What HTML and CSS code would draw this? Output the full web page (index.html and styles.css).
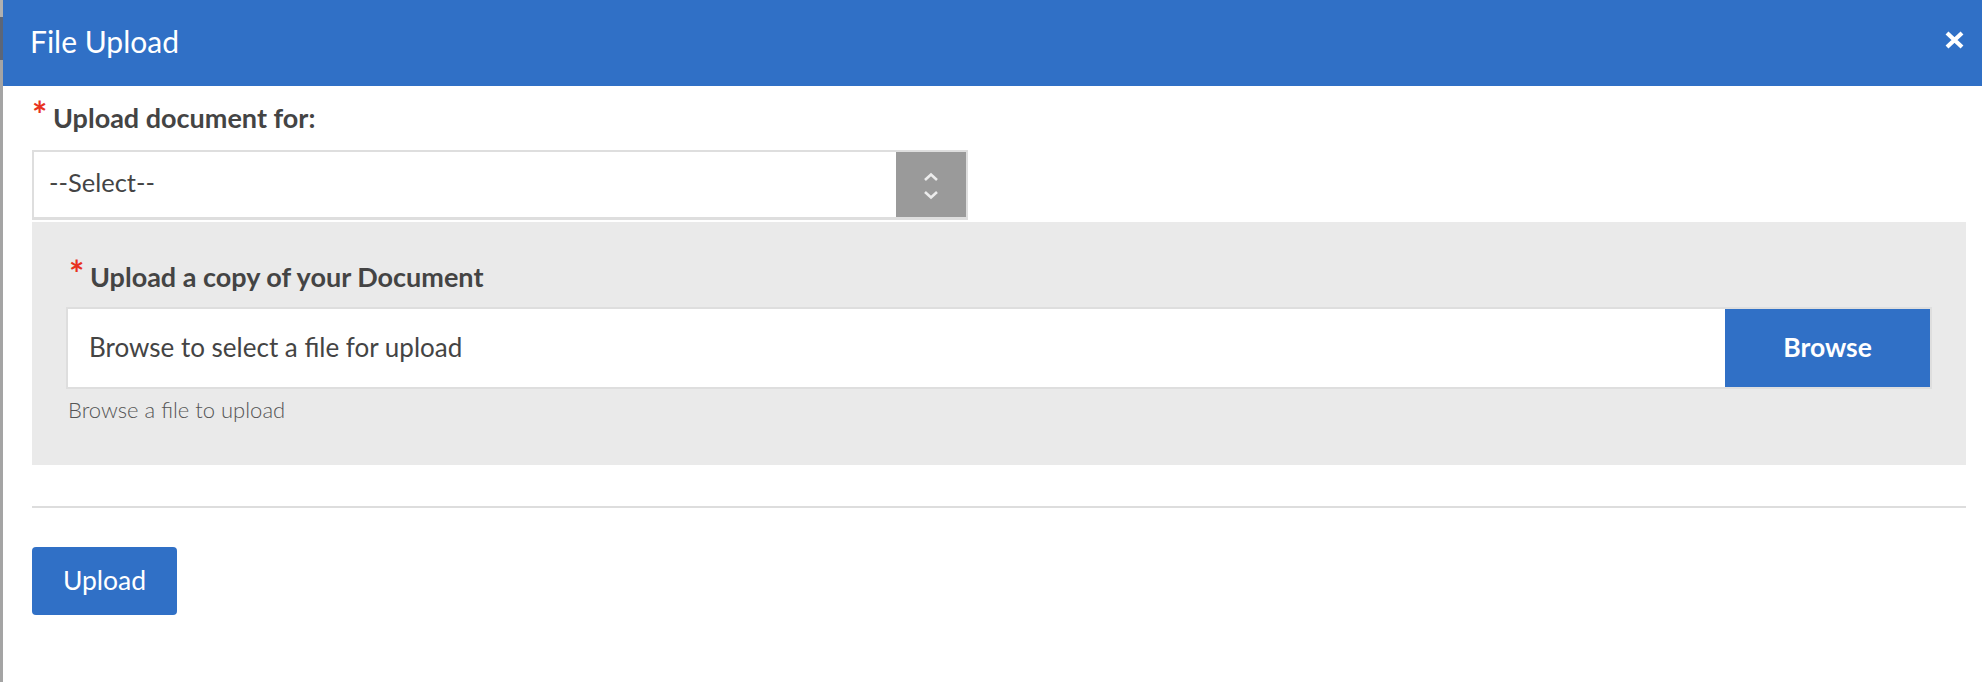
FILE: index.html
```html
<!DOCTYPE html>
<html lang="en">
<head>
<meta charset="utf-8">
<title>File Upload</title>
<link rel="stylesheet" href="styles.css">
</head>
<body>
<div class="page">
  <div class="backdrop-edge"></div>
  <div class="modal">
    <header class="modal-header">
      <h1 class="modal-title">File Upload</h1>
      <button class="close-btn" aria-label="Close">
        <svg width="21" height="18" viewBox="0 0 21 18"><path d="M3 2 L18 16 M18 2 L3 16" stroke="#fff" stroke-width="4.2" stroke-linecap="butt"/></svg>
      </button>
    </header>
    <div class="modal-body">
      <div class="field-label"><span class="req">*</span><span class="label-text">Upload document for:</span></div>
      <div class="select-box">
        <span class="select-text">--Select--</span>
        <span class="spinner">
          <svg width="16" height="30" viewBox="0 0 16 30"><path d="M2 9 L8 3.5 L14 9 M2 21 L8 26.5 L14 21" fill="none" stroke="#ececec" stroke-width="2.6"/></svg>
        </span>
      </div>
      <div class="panel">
        <div class="field-label"><span class="req">*</span><span class="label-text">Upload a copy of your Document</span></div>
        <div class="file-input">
          <span class="file-text">Browse to select a file for upload</span>
          <button class="browse-btn">Browse</button>
        </div>
        <div class="hint">Browse a file to upload</div>
      </div>
      <hr class="divider">
      <button class="upload-btn">Upload</button>
    </div>
  </div>
</div>
</body>
</html>
```

FILE: styles.css
```css
* { box-sizing: border-box; }
html, body {
  margin: 0;
  padding: 0;
  background: #fff;
  font-family: "Lato", "Liberation Sans", sans-serif;
  color: #444;
}
.page {
  display: flex;
  width: 1982px;
  height: 682px;
  overflow: hidden;
}
.backdrop-edge {
  width: 3px;
  flex: 0 0 3px;
  background: linear-gradient(#b0b0b0 0, #b0b0b0 17px, #5c6678 17px, #5c6678 60px, #a4a4a4 60px);
}
.modal {
  flex: 1;
  background: #fff;
}
.modal-header {
  height: 86px;
  background: #3070c6;
  display: flex;
  align-items: center;
  justify-content: space-between;
  padding: 0 17px 0 27px;
}
.modal-title {
  margin: 0;
  font-weight: 400;
  font-size: 30px;
  line-height: 1;
  color: #fff;
  position: relative;
  top: -2px;
}
.close-btn {
  background: none;
  border: 0;
  padding: 0;
  display: flex;
  position: relative;
  top: -3px;
}
.modal-body {
  padding: 17px 16px 0 29px;
}
.field-label {
  display: flex;
  align-items: flex-start;
  height: 30px;
}
.req {
  color: #e8321e;
  font-weight: 700;
  font-size: 36px;
  line-height: 1;
  margin-top: -7px;
  width: 21px;
  padding-left: 0;
}
.label-text {
  font-weight: 700;
  font-size: 27px;
  line-height: 30px;
  color: #444;
}
.select-box {
  margin-top: 17px;
  width: 936px;
  height: 70px;
  border: 2px solid #dedede;
  border-bottom-width: 3px;
  display: flex;
  align-items: stretch;
  background: #fff;
}
.select-text {
  flex: 1;
  display: flex;
  align-items: center;
  padding-left: 15px;
  padding-bottom: 5px;
  font-size: 25.5px;
  color: #444;
}
.spinner {
  width: 70px;
  background: #9a9a9a;
  display: flex;
  align-items: center;
  justify-content: center;
  padding-top: 2px;
}
.panel {
  margin-top: 2px;
  background: #eaeaea;
  padding: 40px 34px 42px 37px;
}
.file-input {
  margin-top: 15px;
  margin-left: -3px;
  height: 82px;
  border: 2px solid #dedede;
  background: #fff;
  display: flex;
  align-items: stretch;
}
.file-text {
  flex: 1;
  display: flex;
  align-items: center;
  padding-left: 21px;
  padding-bottom: 2px;
  font-size: 26px;
  color: #444;
}
.browse-btn {
  width: 205px;
  border: 0;
  margin: 0;
  background: #3070c6;
  color: #fff;
  font-family: inherit;
  font-weight: 700;
  font-size: 26.5px;
  padding: 0 0 3px;
}
.hint {
  margin-top: 8px;
  font-size: 22px;
  line-height: 26px;
  font-weight: 300;
  color: #555;
  margin-left: -1px;
}
.divider {
  margin: 41px 0 0;
  border: 0;
  height: 2px;
  background: #dddddd;
}
.upload-btn {
  margin-top: 39px;
  width: 145px;
  height: 68px;
  border: 0;
  border-radius: 4px;
  background: #3070c6;
  color: #fff;
  font-family: inherit;
  font-size: 26.5px;
  font-weight: 400;
  padding: 0 0 3px;
}
```
